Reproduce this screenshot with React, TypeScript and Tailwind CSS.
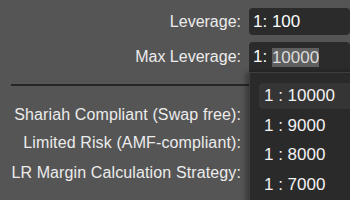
import React from "react";

export default function App() {
  const items = ["1 : 10000", "1 : 9000", "1 : 8000", "1 : 7000"];
  return (
    <div
      className="relative w-[350px] h-[200px] overflow-hidden bg-[#555555] text-[16px] text-[#ececec]"
      style={{ fontFamily: '"Liberation Sans", Arial, sans-serif' }}
    >
      <div className="pt-[8px]">
        <div className="flex items-center h-[27px]">
          <div className="w-[241px] text-right">Leverage:</div>
          <div className="ml-[8px] flex-1 h-[27px] rounded-[4px] bg-[#2b2b2b] flex items-center pl-[4px] text-white text-[17px]">
            1: 100
          </div>
        </div>
        <div className="flex items-center h-[30px] mt-[7px]">
          <div className="w-[241px] text-right">Max Leverage:</div>
          <div className="ml-[8px] flex-1 h-[30px] rounded-t-[4px] bg-[#2b2b2b] flex items-center pl-[4px] text-white text-[17px]">
            <span>1:&nbsp;</span>
            <span className="bg-[#5f5f5f] text-[#dcdcdc] leading-[19px]">10000</span>
          </div>
        </div>
        <div className="ml-[11px] mt-[12px] h-[2px] bg-[#262626]" />
        <div className="mt-[19px] flex flex-col">
          <div className="w-[241px] text-right h-[28px] leading-[20px] tracking-[0.12px]">Shariah Compliant (Swap free):</div>
          <div className="w-[241px] text-right h-[30px] leading-[20px] tracking-[0.12px]">Limited Risk (AMF-compliant):</div>
          <div className="w-[241px] text-right h-[28px] leading-[20px] tracking-[0.12px]">LR Margin Calculation Strategy:</div>
        </div>
      </div>
      <div className="absolute left-[249px] top-[72px] w-[110px] h-[140px] bg-[#2a2a2a] border border-[#3e3e3e] shadow-[-3px_0_5px_rgba(0,0,0,0.35)] pt-[10px] pl-[9px]">
        {items.map((t, i) => (
          <div
            key={t}
            className={
              "h-[26px] mb-[3.5px] flex items-center pl-[5px] rounded-[4px] text-[17px] text-[#f2f2f2] " +
              (i === 0 ? "bg-[#353535]" : "")
            }
          >
            {t}
          </div>
        ))}
      </div>
    </div>
  );
}
